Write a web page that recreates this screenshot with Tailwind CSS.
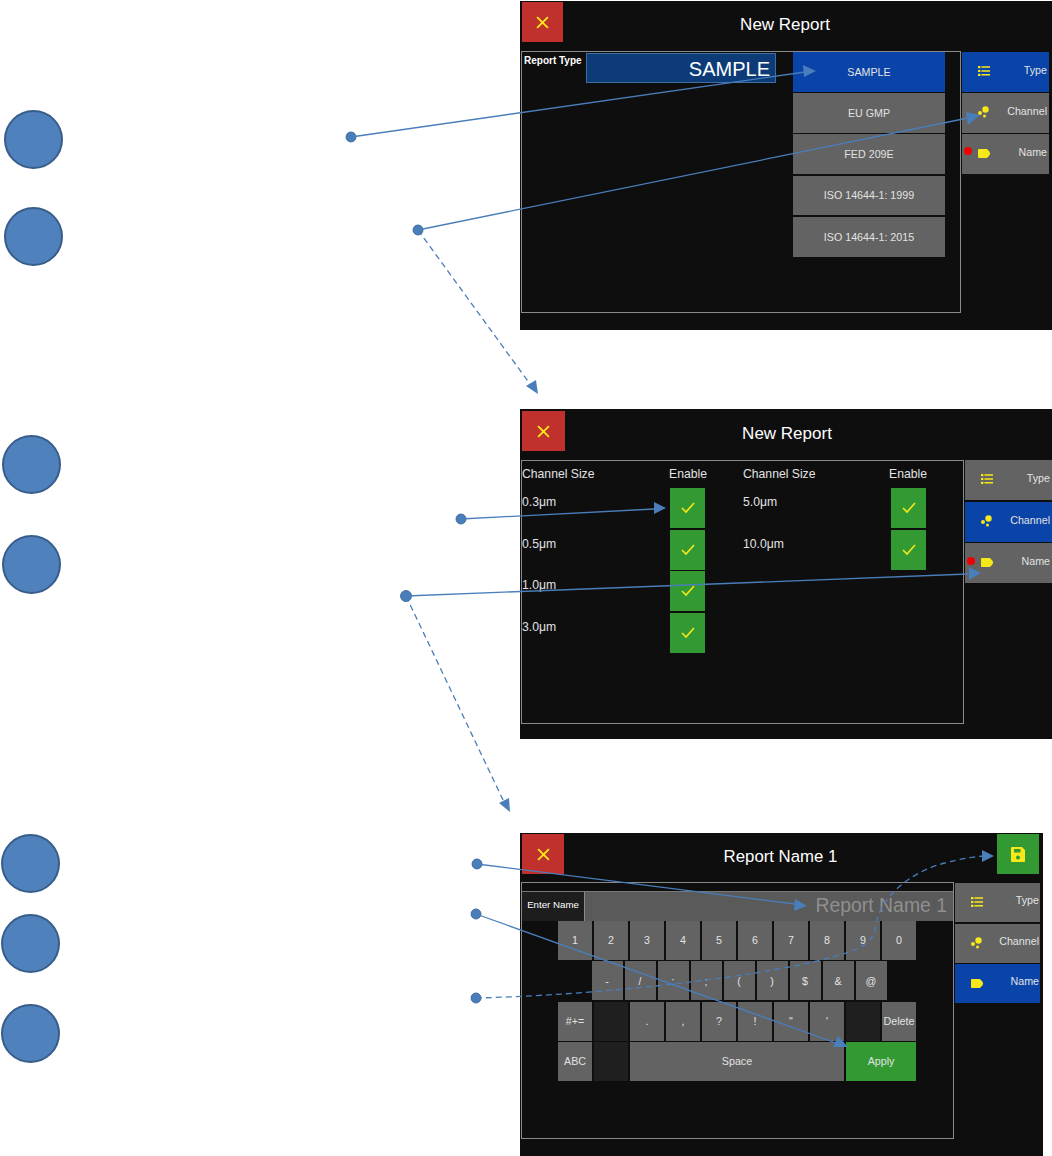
<!doctype html>
<html lang="en">
<head>
<meta charset="UTF-8" />
<title>New Report</title>
<script src="https://cdn.jsdelivr.net/npm/@tailwindcss/browser@4"></script>
</head>
<body>
<div class="relative w-[1052px] h-[1156px] overflow-hidden bg-white font-['Liberation_Sans',Arial,sans-serif] text-[#e2e2e2]">

  <!-- step 1 -->
  <section class="flex h-[329px] mt-[1px] pt-0">
    <div class="w-[520px] shrink-0 pl-[4px] pt-[109px] flex flex-col gap-[38px]">
      <div class="size-[59px] rounded-full bg-[#4f81bd] border-2 border-[#385d8a]"></div>
      <div class="size-[59px] rounded-full bg-[#4f81bd] border-2 border-[#385d8a]"></div>
    </div>
    <div class="w-[532px] h-[329px] bg-[#0e0e0f]">
      <div class="flex h-[41px] pt-[1px] pl-[2px]">
        <div class="w-[41px] h-[40px] bg-[#c0302c] flex items-center justify-center">
          <svg viewBox="0 0 12 12" class="size-[13px]" fill="none" stroke="#f7e81a" stroke-width="1.7"><path d="M1 1l10 10M11 1L1 11"/></svg>
        </div>
        <div class="w-[444px] text-center text-[17px] leading-[46px] text-white">New Report</div>
      </div>
      <div class="flex mt-[9px] pl-[1px]">
        <div class="relative w-[440px] h-[262px] border border-[#8a8a8a] flex">
          <div class="w-[64px] pl-[2px] pt-[2px] text-[10px] leading-[14px] font-bold text-white whitespace-nowrap">Report Type</div>
          <div class="w-[190px] h-[30px] mt-[1px] bg-[#0c3b78] border border-[#3f6ea5] text-right pr-[5px] text-[20px] leading-[31px] text-white">SAMPLE</div>
          <div class="ml-[17px] w-[152px] flex flex-col gap-[1.5px] text-[10.7px]">
            <div class="h-[39.5px] bg-[#0a44a8] flex items-center justify-center">SAMPLE</div>
            <div class="h-[39.8px] bg-[#636363] flex items-center justify-center">EU GMP</div>
            <div class="h-[39.8px] bg-[#636363] flex items-center justify-center">FED 209E</div>
            <div class="h-[39.8px] bg-[#636363] flex items-center justify-center">ISO 14644-1: 1999</div>
            <div class="h-[39.8px] bg-[#636363] flex items-center justify-center">ISO 14644-1: 2015</div>
          </div>
        </div>
        <div class="ml-[1px] mt-[1px] w-[87px] flex flex-col gap-[1.5px] text-[10.7px]">
          <div class="relative h-[39.5px] bg-[#0a44a8] flex justify-between pl-[16px] pr-[2px]">
            <svg viewBox="0 0 12 10" class="size-[12px] mt-[13px]" fill="#f7e81a"><path d="M0 0h2.4v2.2H0zM3.4 .3h8.6v1.5H3.4zM0 3.9h2.4v2.2H0zM3.4 4.2h8.6v1.5H3.4zM0 7.8h2.4V10H0zM3.4 8.1h8.6v1.5H3.4z"/></svg>
            <span class="mt-[10px]">Type</span>
          </div>
          <div class="relative h-[39.5px] bg-[#636363] flex justify-between pl-[16px] pr-[2px]">
            <svg viewBox="0 0 12 12" class="size-[12px] mt-[13px]" fill="#f7e81a"><circle cx="2" cy="7" r="2"/><circle cx="7.5" cy="3.5" r="3.2"/><circle cx="6.5" cy="10" r="1.5"/></svg>
            <span class="mt-[10px]">Channel</span>
          </div>
          <div class="relative h-[39.5px] bg-[#636363] flex justify-between pl-[16px] pr-[2px]">
            <span class="absolute left-[2px] top-[13px] size-[8px] rounded-full bg-[#f00000]"></span>
            <svg viewBox="0 0 12 9" class="w-[12px] h-[9px] mt-[15px]" fill="#f7e81a"><path d="M.8 0h7.7q.6 0 1 .4L11.7 3q.6 1.5 0 3L9.500 8.600q-.4.4-1 .4H.8Q0 9 0 8.200V.8Q0 0 .8 0z"/></svg>
            <span class="mt-[10px]">Name</span>
          </div>
        </div>
      </div>
    </div>
  </section>

  <!-- step 2 -->
  <section class="flex h-[330px] mt-[79px]">
    <div class="w-[520px] shrink-0 pl-[2px] pt-[26px] flex flex-col gap-[41px]">
      <div class="size-[59px] rounded-full bg-[#4f81bd] border-2 border-[#385d8a]"></div>
      <div class="size-[59px] rounded-full bg-[#4f81bd] border-2 border-[#385d8a]"></div>
    </div>
    <div class="w-[532px] h-[330px] bg-[#0e0e0f]">
      <div class="flex h-[42px] pt-[2px] pl-[2px]">
        <div class="w-[43px] h-[40px] bg-[#c0302c] flex items-center justify-center">
          <svg viewBox="0 0 12 12" class="size-[13px]" fill="none" stroke="#f7e81a" stroke-width="1.7"><path d="M1 1l10 10M11 1L1 11"/></svg>
        </div>
        <div class="w-[444px] text-center text-[17px] leading-[46px] text-white">New Report</div>
      </div>
      <div class="flex mt-[9px] pl-[1px]">
        <div class="w-[443px] h-[264px] border border-[#8a8a8a] text-[12.2px]">
          <div class="grid grid-cols-[148px_35px_38px_148px_35px] gap-y-[1.5px] items-start">
            <div class="col-span-5 grid grid-cols-[147px_74px_146px_60px] h-[25.500px] leading-[26px] whitespace-nowrap">
              <span>Channel Size</span><span>Enable</span><span>Channel Size</span><span>Enable</span>
            </div>
            <span class="leading-[29px]">0.3μm</span>
            <div class="h-[40px] bg-[#339933] flex items-center justify-center"><svg viewBox="0 0 14 12" class="w-[14px] h-[12px]" fill="none" stroke="#f7e81a" stroke-width="1.6"><path d="M1 6l4 4 8-9"/></svg></div>
            <span></span>
            <span class="leading-[29px]">5.0μm</span>
            <div class="h-[40px] bg-[#339933] flex items-center justify-center"><svg viewBox="0 0 14 12" class="w-[14px] h-[12px]" fill="none" stroke="#f7e81a" stroke-width="1.6"><path d="M1 6l4 4 8-9"/></svg></div>
            <span class="leading-[29px]">0.5μm</span>
            <div class="h-[40px] bg-[#339933] flex items-center justify-center"><svg viewBox="0 0 14 12" class="w-[14px] h-[12px]" fill="none" stroke="#f7e81a" stroke-width="1.6"><path d="M1 6l4 4 8-9"/></svg></div>
            <span></span>
            <span class="leading-[29px]">10.0μm</span>
            <div class="h-[40px] bg-[#339933] flex items-center justify-center"><svg viewBox="0 0 14 12" class="w-[14px] h-[12px]" fill="none" stroke="#f7e81a" stroke-width="1.6"><path d="M1 6l4 4 8-9"/></svg></div>
            <span class="leading-[29px]">1.0μm</span>
            <div class="h-[40px] bg-[#339933] flex items-center justify-center"><svg viewBox="0 0 14 12" class="w-[14px] h-[12px]" fill="none" stroke="#f7e81a" stroke-width="1.6"><path d="M1 6l4 4 8-9"/></svg></div>
            <span class="col-span-3"></span>
            <span class="leading-[29px]">3.0μm</span>
            <div class="h-[40px] bg-[#339933] flex items-center justify-center"><svg viewBox="0 0 14 12" class="w-[14px] h-[12px]" fill="none" stroke="#f7e81a" stroke-width="1.6"><path d="M1 6l4 4 8-9"/></svg></div>
          </div>
        </div>
        <div class="ml-[1px] w-[87px] flex flex-col gap-[1.5px] text-[10.7px]">
          <div class="relative h-[40px] bg-[#636363] flex justify-between pl-[16px] pr-[2px]">
            <svg viewBox="0 0 12 10" class="size-[12px] mt-[13px]" fill="#f7e81a"><path d="M0 0h2.4v2.2H0zM3.4 .3h8.6v1.5H3.4zM0 3.9h2.4v2.2H0zM3.4 4.2h8.6v1.5H3.4zM0 7.8h2.4V10H0zM3.4 8.1h8.6v1.5H3.4z"/></svg>
            <span class="mt-[10px]">Type</span>
          </div>
          <div class="relative h-[40px] bg-[#0a44a8] flex justify-between pl-[16px] pr-[2px]">
            <svg viewBox="0 0 12 12" class="size-[12px] mt-[13px]" fill="#f7e81a"><circle cx="2" cy="7" r="2"/><circle cx="7.5" cy="3.5" r="3.2"/><circle cx="6.5" cy="10" r="1.5"/></svg>
            <span class="mt-[10px]">Channel</span>
          </div>
          <div class="relative h-[40px] bg-[#636363] flex justify-between pl-[16px] pr-[2px]">
            <span class="absolute left-[2px] top-[14px] size-[8px] rounded-full bg-[#f00000]"></span>
            <svg viewBox="0 0 12 9" class="w-[12px] h-[9px] mt-[15px]" fill="#f7e81a"><path d="M.8 0h7.7q.6 0 1 .4L11.7 3q.6 1.5 0 3L9.500 8.600q-.4.4-1 .4H.8Q0 9 0 8.200V.8Q0 0 .8 0z"/></svg>
            <span class="mt-[10px]">Name</span>
          </div>
        </div>
      </div>
    </div>
  </section>

  <!-- step 3 -->
  <section class="flex h-[323px] mt-[94px]">
    <div class="w-[520px] shrink-0 pl-[1px] pt-[1px] flex flex-col gap-[21px]">
      <div class="size-[59px] rounded-full bg-[#4f81bd] border-2 border-[#385d8a]"></div>
      <div class="size-[59px] rounded-full bg-[#4f81bd] border-2 border-[#385d8a] mb-[10px]"></div>
      <div class="size-[59px] rounded-full bg-[#4f81bd] border-2 border-[#385d8a]"></div>
    </div>
    <div class="w-[523px] h-[323px] bg-[#0e0e0f]">
      <div class="flex h-[42px] pt-[1px] pl-[2px]">
        <div class="w-[42px] h-[40px] bg-[#c0302c] flex items-center justify-center">
          <svg viewBox="0 0 12 12" class="size-[13px]" fill="none" stroke="#f7e81a" stroke-width="1.7"><path d="M1 1l10 10M11 1L1 11"/></svg>
        </div>
        <div class="w-[433px] text-center text-[16.800px] leading-[46px] text-white">Report Name 1</div>
        <div class="w-[42px] h-[40px] bg-[#339933] flex items-center justify-center">
          <svg viewBox="0 0 14 15" class="w-[14px] h-[15px]" fill="#f7e81a"><path fill-rule="evenodd" d="M0 1a1 1 0 0 1 1-1h10l3 3v11a1 1 0 0 1-1 1H1a1 1 0 0 1-1-1zM3 2v3.500h6.500V2zM7 8.500a2 2 0 1 0 0 4 2 2 0 0 0 0-4z"/></svg>
        </div>
      </div>
      <div class="flex mt-[7px] pl-[1px]">
        <div class="w-[433px] h-[257px] border border-[#8a8a8a]">
          <div class="flex h-[30px] mt-[8px] border-t border-[#777]">
            <div class="w-[63px] bg-[#1d1d1d] border-r border-[#8a8a8a] text-[9.700px] leading-[26px] text-center text-white whitespace-nowrap">Enter Name</div>
            <div class="flex-1 bg-[#5a5a5a] text-right pr-[6px] text-[19.400px] leading-[26px] text-[#8f8f8f]">Report Name 1</div>
          </div>
          <div class="w-[358px] ml-[36px] text-[10.7px]">
            <div class="grid grid-cols-10 gap-x-[2px] h-[39px]">
              <div class="bg-[#636363] flex items-center justify-center">1</div><div class="bg-[#636363] flex items-center justify-center">2</div><div class="bg-[#636363] flex items-center justify-center">3</div><div class="bg-[#636363] flex items-center justify-center">4</div><div class="bg-[#636363] flex items-center justify-center">5</div><div class="bg-[#636363] flex items-center justify-center">6</div><div class="bg-[#636363] flex items-center justify-center">7</div><div class="bg-[#636363] flex items-center justify-center">8</div><div class="bg-[#636363] flex items-center justify-center">9</div><div class="bg-[#636363] flex items-center justify-center">0</div>
            </div>
            <div class="flex justify-center gap-[2px] h-[39px] mt-[1.300px] pl-[4px]">
              <div class="w-[31px] bg-[#636363] flex items-center justify-center">-</div><div class="w-[31px] bg-[#636363] flex items-center justify-center">/</div><div class="w-[31px] bg-[#636363] flex items-center justify-center">:</div><div class="w-[31px] bg-[#636363] flex items-center justify-center">;</div><div class="w-[31px] bg-[#636363] flex items-center justify-center">(</div><div class="w-[31px] bg-[#636363] flex items-center justify-center">)</div><div class="w-[31px] bg-[#636363] flex items-center justify-center">$</div><div class="w-[31px] bg-[#636363] flex items-center justify-center">&amp;</div><div class="w-[31px] bg-[#636363] flex items-center justify-center">@</div>
            </div>
            <div class="grid grid-cols-10 gap-x-[2px] h-[39px] mt-[1.300px]">
              <div class="bg-[#636363] flex items-center justify-center">#+=</div><div class="bg-[#1f1f1f]"></div><div class="bg-[#636363] flex items-center justify-center">.</div><div class="bg-[#636363] flex items-center justify-center">,</div><div class="bg-[#636363] flex items-center justify-center">?</div><div class="bg-[#636363] flex items-center justify-center">!</div><div class="bg-[#636363] flex items-center justify-center">"</div><div class="bg-[#636363] flex items-center justify-center">'</div><div class="bg-[#1f1f1f]"></div><div class="bg-[#636363] flex items-center justify-center">Delete</div>
            </div>
            <div class="grid grid-cols-10 gap-x-[2px] h-[39px] mt-[1.300px]">
              <div class="bg-[#636363] flex items-center justify-center">ABC</div><div class="bg-[#1f1f1f]"></div><div class="col-span-6 bg-[#636363] flex items-center justify-center">Space</div><div class="col-span-2 bg-[#339933] flex items-center justify-center">Apply</div>
            </div>
          </div>
        </div>
        <div class="ml-[1px] mt-[1px] w-[85px] flex flex-col gap-[1.500px] text-[10.7px]">
          <div class="relative h-[39px] bg-[#636363] flex justify-between pl-[16px] pr-[1px]">
            <svg viewBox="0 0 12 10" class="size-[12px] mt-[13px]" fill="#f7e81a"><path d="M0 0h2.4v2.2H0zM3.4 .3h8.6v1.5H3.4zM0 3.9h2.4v2.2H0zM3.4 4.2h8.6v1.5H3.4zM0 7.8h2.4V10H0zM3.4 8.1h8.6v1.5H3.4z"/></svg>
            <span class="mt-[9px]">Type</span>
          </div>
          <div class="relative h-[39px] bg-[#636363] flex justify-between pl-[16px] pr-[1px]">
            <svg viewBox="0 0 12 12" class="size-[12px] mt-[13px]" fill="#f7e81a"><circle cx="2" cy="7" r="2"/><circle cx="7.5" cy="3.5" r="3.2"/><circle cx="6.5" cy="10" r="1.5"/></svg>
            <span class="mt-[9px]">Channel</span>
          </div>
          <div class="relative h-[39px] bg-[#0a44a8] flex justify-between pl-[16px] pr-[1px]">
            <svg viewBox="0 0 12 9" class="w-[12px] h-[9px] mt-[15px]" fill="#f7e81a"><path d="M.8 0h7.7q.6 0 1 .4L11.7 3q.6 1.5 0 3L9.500 8.600q-.4.4-1 .4H.8Q0 9 0 8.200V.8Q0 0 .8 0z"/></svg>
            <span class="mt-[9px]">Name</span>
          </div>
        </div>
      </div>
    </div>
  </section>

  <!-- callout arrows lie over everything -->
  <svg class="absolute inset-0 pointer-events-none" width="1052" height="1156" viewBox="0 0 1052 1156" fill="none" stroke="#4a7ebb" stroke-width="1.3">
    <g fill="#4a7ebb" stroke="#2f5f96" stroke-width="0.8">
      <circle cx="351" cy="137" r="5"/><circle cx="418" cy="230" r="5"/><circle cx="461" cy="519" r="5"/><circle cx="406" cy="596" r="5.5"/><circle cx="477" cy="864" r="5"/><circle cx="476" cy="914" r="5"/><circle cx="476" cy="998" r="5"/>
    </g>
    <path d="M351 137L805 72"/><path d="M418 230L968 118"/><path d="M461 519L654 509"/><path d="M406 596L968 574"/><path d="M477 864L795 904"/><path d="M476 914L836 1043"/>
    <path stroke-dasharray="6 4" d="M418 230L530 384"/><path stroke-dasharray="6 4" d="M406 596L504 802"/>
    <path stroke-dasharray="6 4" d="M476 998C600 995 750 978 821 960C860 950 873 945 876 925C880 895 915 870 945 863C960 859 970 857 984 856"/>
    <g fill="#4a7ebb" stroke="none">
      <path d="M816 71L803 65L804 77Z"/><path d="M980 115L966 112L968 125Z"/><path d="M666 508L654 502L654 514Z"/><path d="M981 573L969 567L969 580Z"/><path d="M807 906L795 899L794 911Z"/><path d="M848 1047L838 1036L833 1047Z"/><path d="M538 394L526 386L536 380Z"/><path d="M510 812L499 803L509 798Z"/><path d="M994 856L982 850L982 862Z"/>
    </g>
  </svg>
</div>
</body>
</html>
